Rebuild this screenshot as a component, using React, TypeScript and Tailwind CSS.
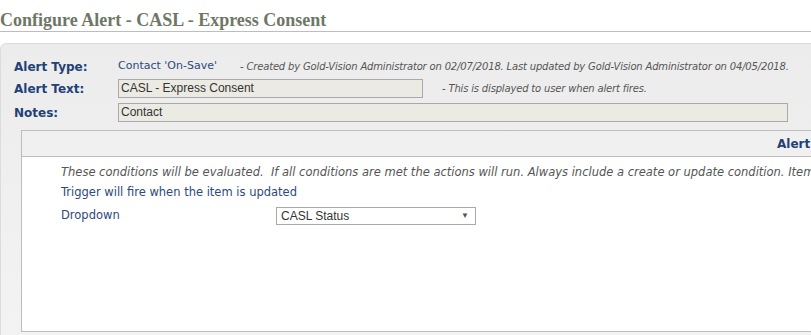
import React from 'react';

const label = 'font-["DejaVu_Sans",sans-serif] text-[12px] font-bold text-[#233f77]';
const note = 'font-["DejaVu_Sans",sans-serif] text-[10px] italic tracking-[-0.17px] text-[#555]';
const field = 'h-[19px] border border-[#a9a9a9] bg-[#ebebe4] px-[2px] font-["Liberation_Sans",sans-serif] text-[12px] leading-[17px] text-[#333]';

export default function App() {
  return (
    <div className="h-[335px] w-[811px] overflow-hidden bg-white">
      <h1 className='h-[32px] border-b border-[#bdbdbd] pt-[10px] font-["Liberation_Serif",serif] text-[18px] font-bold leading-[20px] text-[#6e7766]'>
        Configure Alert - CASL - Express Consent
      </h1>

      <div className="mt-[11px] h-[300px] w-[900px] rounded-tl-[6px] border border-[#dcdcdc] bg-gradient-to-b from-[#ececec] to-[#f3f3f3]">
        <div className="flex flex-col pl-[13px] pt-[13px]">
          <div className="flex h-[19px] items-center">
            <span className={`${label} w-[104px]`}>Alert Type:</span>
            <span className='w-[122px] font-["DejaVu_Sans",sans-serif] text-[11px] text-[#2c4a7c]'>Contact 'On-Save'</span>
            <span className={note}>- Created by Gold-Vision Administrator on 02/07/2018. Last updated by Gold-Vision Administrator on 04/05/2018.</span>
          </div>
          <div className="mt-[3px] flex h-[19px] items-center">
            <span className={`${label} w-[104px]`}>Alert Text:</span>
            <div className={`${field} w-[305px]`}>CASL - Express Consent</div>
            <span className={`${note} ml-[19px]`}>- This is displayed to user when alert fires.</span>
          </div>
          <div className="mt-[5px] flex h-[19px] items-center">
            <span className={`${label} w-[104px]`}>Notes:</span>
            <div className={`${field} w-[670px]`}>Contact</div>
          </div>
        </div>

        <div className="ml-[20px] mt-[8px] h-[202px] border border-[#bdbdbd] bg-white">
          <div className='flex h-[26px] items-center border-b border-[#bdbdbd] bg-[#f0f0f0] pl-[755px] font-["DejaVu_Sans",sans-serif] text-[12px] font-bold text-[#233f77]'>
            Alert Conditions
          </div>
          <div className='pl-[39px] pt-[5px] font-["DejaVu_Sans",sans-serif] text-[11.5px]'>
            <p className="h-[20px] whitespace-nowrap leading-[20px] italic text-[#555]">
              These conditions will be evaluated.&nbsp; If all conditions are met the actions will run. Always include a create or update condition. Items will be checked.
            </p>
            <p className="h-[20px] leading-[20px] text-[#2c4a7c]">Trigger will fire when the item is updated</p>
            <div className="mt-[5px] flex items-center">
              <span className="w-[215px] text-[#2c4a7c]">Dropdown</span>
              <div className='flex h-[18px] w-[200px] items-center justify-between border border-[#a9a9a9] bg-white pl-[4px] pr-[6px] font-["Liberation_Sans",sans-serif] text-[12px] text-[#333]'>
                <span>CASL Status</span>
                <span className="text-[8px] text-[#555]">▼</span>
              </div>
            </div>
          </div>
        </div>
      </div>
    </div>
  );
}
